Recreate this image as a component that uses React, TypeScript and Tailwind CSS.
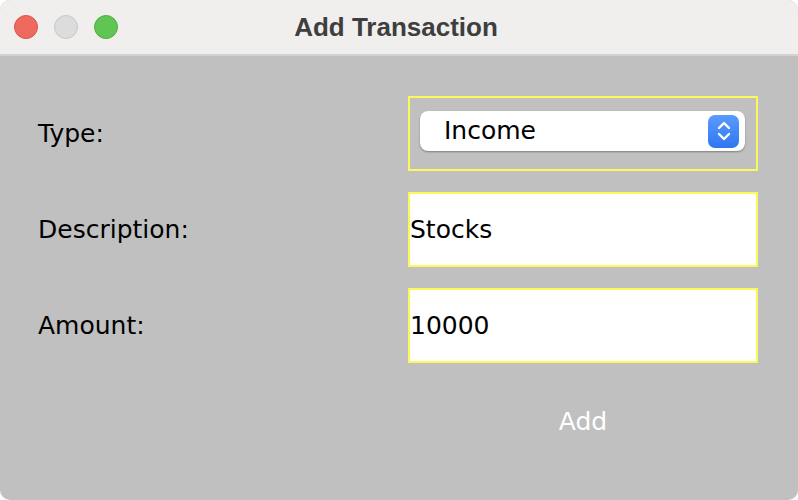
export default function App() {
  const font = { fontFamily: '"DejaVu Sans", "Liberation Sans", sans-serif' };

  return (
    <div className="w-[798px] h-[500px] bg-white">
      <div
        className="w-full h-full rounded-[10px] overflow-hidden flex flex-col bg-[#c0c0c0]"
        style={font}
      >
        {/* title bar */}
        <div className="relative h-[56px] shrink-0 bg-[#f0efed] border-b-2 border-[#d2d2d2] flex items-center justify-center">
          <div className="absolute left-[14px] top-[15px] flex gap-4">
            <span className="w-6 h-6 rounded-full bg-[#ee6a5f] border border-[#d9564b]" />
            <span className="w-6 h-6 rounded-full bg-[#dcdcdc] border border-[#c8c8c8]" />
            <span className="w-6 h-6 rounded-full bg-[#61c554] border border-[#4fae42]" />
          </div>
          <span
            className="text-[26px] font-bold text-[#3e3e3e] -ml-[6px]"
            style={{ fontFamily: '"Liberation Sans", Arial, sans-serif' }}
          >
            Add Transaction
          </span>
        </div>

        {/* form */}
        <div className="grid grid-cols-2 gap-x-5 gap-y-[21px] pl-[38px] pr-[40px] pt-[40px] text-[25px] text-black">
          <div className="h-[75px] flex items-center">Type:</div>
          <div className="h-[75px] border-2 border-[#fbf95a] pl-[10px] pr-[11px] pt-[13px]">
            <div className="h-10 bg-white rounded-lg shadow-[0_1px_2px_rgba(0,0,0,0.35)] flex items-center justify-between pl-6 pr-[6px]">
              <span>Income</span>
              <span className="w-[31px] h-[33px] rounded-[7px] bg-gradient-to-b from-[#5a9bff] to-[#2f77f0] flex items-center justify-center">
                <svg width="16" height="24" viewBox="0 0 16 24" fill="none">
                  <path
                    d="M3 9 L8 4 L13 9 M3 15 L8 20 L13 15"
                    stroke="white"
                    strokeWidth="2.4"
                    strokeLinecap="round"
                    strokeLinejoin="round"
                  />
                </svg>
              </span>
            </div>
          </div>

          <div className="h-[75px] flex items-center">Description:</div>
          <div className="h-[75px] border-2 border-[#fbf95a] bg-white flex items-center">
            Stocks
          </div>

          <div className="h-[75px] flex items-center">Amount:</div>
          <div className="h-[75px] border-2 border-[#fbf95a] bg-white flex items-center">
            10000
          </div>

          <div className="h-[75px]" />
          <div className="h-[75px] flex items-center justify-center text-white">
            Add
          </div>
        </div>
      </div>
    </div>
  );
}
